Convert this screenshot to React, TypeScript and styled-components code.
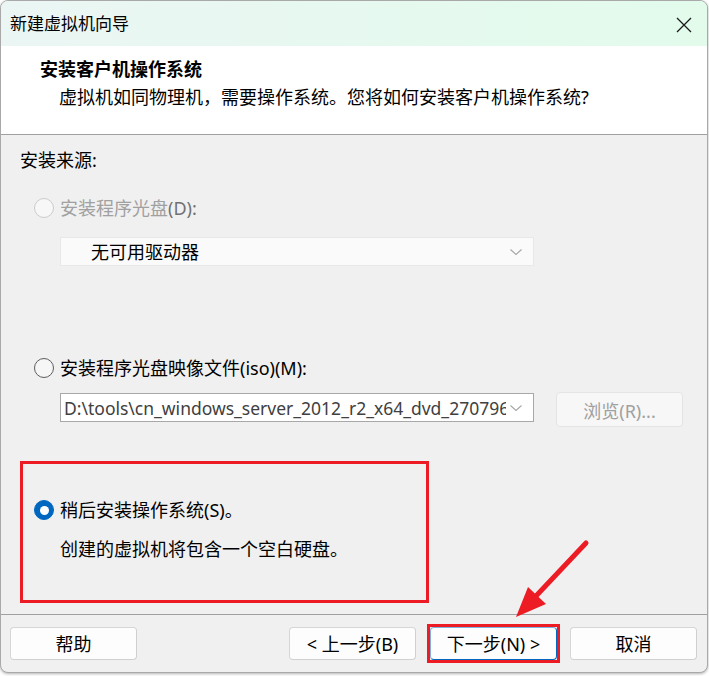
import styled, { createGlobalStyle } from "styled-components";

const GlobalStyles = createGlobalStyle`
    html, body {
        margin: 0;
        padding: 0;
        background: #ffffff;
    }
    body {
        font-family: "Noto Sans", "Noto Sans CJK SC", sans-serif;
        color: #000000;
    }
`;

// Styled Components
const Page = styled.div`
    position: relative;
    width: 709px;
    height: 676px;
    overflow: hidden;
`;

const Window = styled.div`
    width: 708px;
    height: 673px;
    box-sizing: border-box;
    border: 1px solid #a9a9a9;
    border-radius: 8px;
    overflow: hidden;
    display: flex;
    flex-direction: column;
    background: #f0f0f0;
    box-shadow: 0 1px 3px rgba(0, 0, 0, 0.3);
`;

const TitleBar = styled.div`
    height: 45px;
    flex: none;
    display: flex;
    align-items: center;
    justify-content: space-between;
    padding: 0 15px 0 9px;
    background: linear-gradient(90deg, #ebf6f4, #e2fbeb);
`;

const TitleText = styled.span`
    font-size: 17px;
    line-height: 24px;
`;

const CloseIcon = styled.svg`
    width: 16px;
    height: 16px;
    margin-top: 2px;
`;

const Header = styled.div`
    height: 89px;
    flex: none;
    box-sizing: border-box;
    background: #ffffff;
    border-bottom: 1px solid #a0a0a0;
    padding: 11px 0 0 39px;
`;

const HeaderTitle = styled.div`
    font-size: 18px;
    font-weight: 700;
    line-height: 24px;
`;

const HeaderSub = styled.div`
    font-size: 18px;
    line-height: 24px;
    margin-top: 4px;
    padding-left: 19px;
`;

const Content = styled.div`
    height: 480px;
    flex: none;
    box-sizing: border-box;
    border-bottom: 1px solid #a0a0a0;
    padding: 13px 0 0 19px;
    display: flex;
    flex-direction: column;
    align-items: flex-start;
`;

const SectionLabel = styled.div`
    font-size: 18px;
    line-height: 24px;
`;

const OptionRow = styled.label<{ $top: number; $indent?: number }>`
    display: flex;
    align-items: center;
    gap: 6px;
    height: 24px;
    margin-top: ${(p) => p.$top}px;
    margin-left: ${(p) => p.$indent ?? 14}px;
`;

const Radio = styled.span<{ $state: "disabled" | "normal" | "checked" }>`
    width: 20px;
    height: 20px;
    box-sizing: border-box;
    border-radius: 50%;
    flex: none;
    display: flex;
    align-items: center;
    justify-content: center;
    border: 1px solid
        ${(p) => (p.$state === "disabled" ? "#cbcbcb" : p.$state === "checked" ? "#0067c0" : "#5c5c5c")};
    background: ${(p) => (p.$state === "checked" ? "#0067c0" : p.$state === "disabled" ? "#f7f7f7" : "#f6f6f6")};

    &::after {
        content: "";
        display: ${(p) => (p.$state === "checked" ? "block" : "none")};
        width: 9px;
        height: 9px;
        border-radius: 50%;
        background: #ffffff;
    }
`;

const OptionText = styled.span<{ $disabled?: boolean }>`
    font-size: 18px;
    line-height: 24px;
    color: ${(p) => (p.$disabled ? "#a0a0a0" : "#000000")};

    b {
        font-weight: 400;
        color: ${(p) => (p.$disabled ? "#707070" : "#000000")};
    }
`;

const Select = styled.div<{ $disabled?: boolean; $top: number }>`
    width: 474px;
    height: 29px;
    box-sizing: border-box;
    margin: ${(p) => p.$top}px 0 0 40px;
    display: flex;
    align-items: center;
    background: ${(p) => (p.$disabled ? "#fafafa" : "#ffffff")};
    border: 1px solid ${(p) => (p.$disabled ? "#e8e8e8" : "#a8a8a8")};
    overflow: hidden;
`;

const SelectValue = styled.span<{ $pad: number; $color: string; $size: number }>`
    flex: 1;
    min-width: 0;
    padding-left: ${(p) => p.$pad}px;
    font-size: ${(p) => p.$size}px;
    line-height: 24px;
    white-space: nowrap;
    overflow: hidden;
    color: ${(p) => p.$color};
`;

const Chevron = styled.svg`
    width: 27px;
    height: 10px;
    flex: none;
    padding: 0 6px 0 0;
    box-sizing: border-box;
`;

const PathRow = styled.div`
    display: flex;
    align-items: flex-start;
    gap: 22px;
    margin-top: 12px;

    ${Select} {
        margin-top: 1px;
    }
`;

const BrowseButton = styled.button`
    width: 127px;
    height: 35px;
    box-sizing: border-box;
    border: 1px solid #e4e4e4;
    border-radius: 4px;
    background: #f7f7f7;
    color: #a0a0a0;
    font-family: inherit;
    font-size: 18px;
    padding: 0;
`;

const Highlight = styled.div`
    width: 409px;
    height: 142px;
    box-sizing: border-box;
    margin-top: 34px;
    border: 3px solid #ed1c24;
    padding: 34px 0 0 11px;
`;

const Description = styled.div`
    font-size: 18px;
    line-height: 24px;
    margin: 15px 0 0 26px;
`;

const Footer = styled.div`
    flex: 1;
    display: flex;
    align-items: center;
    padding: 0 10px 0 9px;
`;

const Button = styled.button<{ $primary?: boolean }>`
    width: 127px;
    height: 33px;
    box-sizing: border-box;
    border: 1px solid ${(p) => (p.$primary ? "#0067c0" : "#d0d0d0")};
    border-top-color: ${(p) => (p.$primary ? "#7fb2de" : "#d6d6d6")};
    border-left-color: ${(p) => (p.$primary ? "#7fb2de" : "#d6d6d6")};
    border-radius: 4px;
    background: #fdfdfd;
    color: #000000;
    font-family: inherit;
    font-size: 18px;
    line-height: 24px;
    padding: 0;
`;

const Spacer = styled.div`
    flex: 1;
`;

const NextFrame = styled.div`
    border: 3px solid #ed1c24;
    display: flex;
    margin: 0 10px 0 11px;
`;

const Arrow = styled.svg`
    position: absolute;
    left: 505px;
    top: 535px;
    width: 90px;
    height: 90px;
    pointer-events: none;
`;

function ChevronDown({ color }: { color: string }) {
    return (
        <Chevron viewBox="0 0 21 10">
            <path d="M4.5 2.5 L10 7.5 L15.5 2.5" fill="none" stroke={color} strokeWidth="1.1" />
        </Chevron>
    );
}

function App() {
    return (
        <Page>
            <GlobalStyles />
            <Window>
                <TitleBar>
                    <TitleText>新建虚拟机向导</TitleText>
                    <CloseIcon viewBox="0 0 16 16">
                        <path d="M1 1 L15 15 M15 1 L1 15" stroke="#1a1a1a" strokeWidth="1.3" fill="none" />
                    </CloseIcon>
                </TitleBar>

                <Header>
                    <HeaderTitle>安装客户机操作系统</HeaderTitle>
                    <HeaderSub>虚拟机如同物理机，需要操作系统。您将如何安装客户机操作系统?</HeaderSub>
                </Header>

                <Content>
                    <SectionLabel>安装来源:</SectionLabel>

                    <OptionRow $top={24}>
                        <Radio $state="disabled" />
                        <OptionText $disabled>
                            安装程序光盘<b>(D):</b>
                        </OptionText>
                    </OptionRow>
                    <Select $disabled $top={17}>
                        <SelectValue $pad={30} $color="#000000" $size={18}>
                            无可用驱动器
                        </SelectValue>
                        <ChevronDown color="#a6a6a6" />
                    </Select>

                    <OptionRow $top={90}>
                        <Radio $state="normal" />
                        <OptionText>安装程序光盘映像文件(iso)(M):</OptionText>
                    </OptionRow>
                    <PathRow>
                        <Select $top={0}>
                            <SelectValue $pad={3} $color="#404040" $size={17.5}>
                                D:\tools\cn_windows_server_2012_r2_x64_dvd_2707961.iso
                            </SelectValue>
                            <ChevronDown color="#a6a6a6" />
                        </Select>
                        <BrowseButton>浏览(R)...</BrowseButton>
                    </PathRow>

                    <Highlight>
                        <OptionRow $top={0} $indent={0}>
                            <Radio $state="checked" />
                            <OptionText>稍后安装操作系统(S)。</OptionText>
                        </OptionRow>
                        <Description>创建的虚拟机将包含一个空白硬盘。</Description>
                    </Highlight>
                </Content>

                <Footer>
                    <Button>帮助</Button>
                    <Spacer />
                    <Button>&lt; 上一步(B)</Button>
                    <NextFrame>
                        <Button $primary>下一步(N) &gt;</Button>
                    </NextFrame>
                    <Button>取消</Button>
                </Footer>
            </Window>

            <Arrow viewBox="0 0 90 90">
                <line x1="81" y1="8" x2="31" y2="61" stroke="#ed1c24" strokeWidth="5" strokeLinecap="round" />
                <polygon points="11,82 23,52 41,69" fill="#ed1c24" />
            </Arrow>
        </Page>
    );
}

export default App;
